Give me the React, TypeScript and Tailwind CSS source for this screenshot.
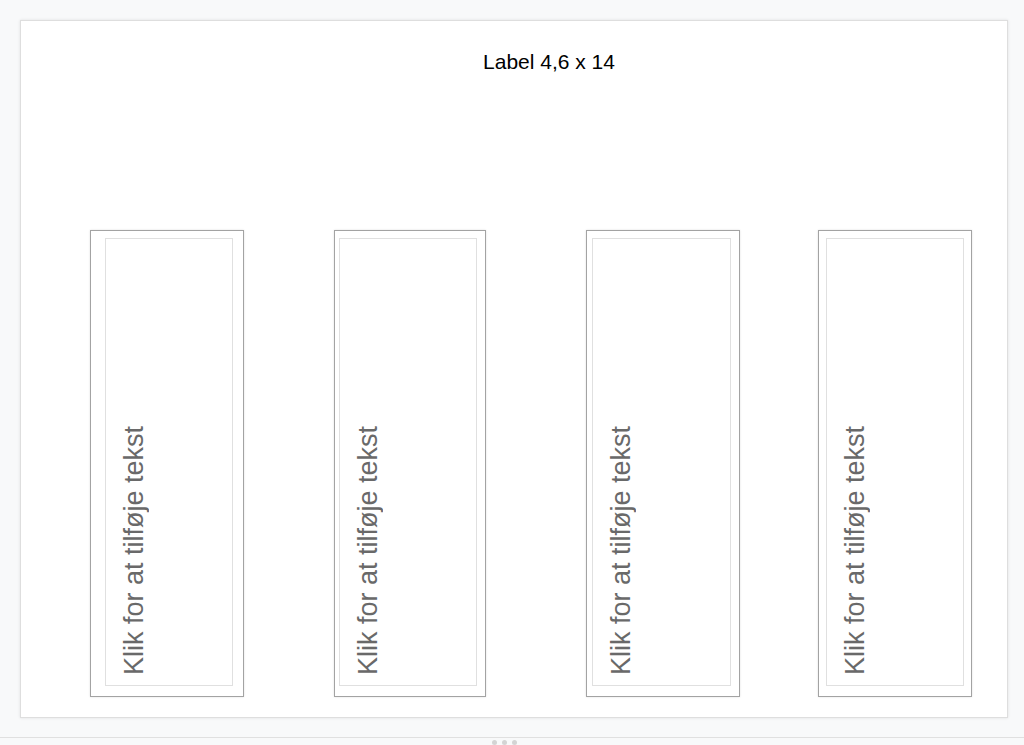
const labels = [
  { id: 1, outer: "ml-0 w-[154px]", inner: "ml-[14px] mr-[10px]" },
  { id: 2, outer: "ml-[90px] w-[152px]", inner: "ml-[4px] mr-[8px]" },
  { id: 3, outer: "ml-[100px] w-[154px]", inner: "ml-[5px] mr-[8px]" },
  { id: 4, outer: "ml-[78px] w-[154px]", inner: "ml-[7px] mr-[7px]" },
];

function LabelBox({ outer, inner }: { outer: string; inner: string }) {
  return (
    <div
      className={`flex h-[467px] shrink-0 border border-[#a3a3a3] bg-white shadow-[0_0_2px_rgba(0,0,0,0.12)] ${outer}`}
    >
      <div
        className={`mt-[7px] mb-[10px] flex flex-1 flex-col justify-end border border-[#e0e0e0] pb-[10px] pl-[15px] ${inner}`}
      >
        <span className="self-start rotate-180 text-[27px] leading-none text-[#696969] [writing-mode:vertical-rl] whitespace-nowrap">
          Klik for at tilføje tekst
        </span>
      </div>
    </div>
  );
}

export default function App() {
  return (
    <div
      className="flex h-[745px] flex-col overflow-hidden bg-[#f8f9fa]"
      style={{ fontFamily: '"Liberation Sans", Arial, sans-serif' }}
    >
      <div className="ml-[20px] mt-[20px] h-[699px] w-[988px] border border-[#dedede] bg-white shadow-[0_0_3px_rgba(0,0,0,0.1)]">
        <div className="pt-[29px] text-center text-[21px] leading-[24px] text-black">
          <span className="relative left-[35px]">Label 4,6 x 14</span>
        </div>
        <div className="mt-[156px] flex pl-[69px]">
          {labels.map((l) => (
            <LabelBox key={l.id} outer={l.outer} inner={l.inner} />
          ))}
        </div>
      </div>
      <div className="mt-[19px] border-t border-[#e0e0e0]" />
      <div className="mt-[2px] flex justify-center gap-[5px] pr-[16px]">
        <span className="h-[5px] w-[5px] rounded-full bg-[#d4d4d4]" />
        <span className="h-[5px] w-[5px] rounded-full bg-[#d4d4d4]" />
        <span className="h-[5px] w-[5px] rounded-full bg-[#d4d4d4]" />
      </div>
    </div>
  );
}
